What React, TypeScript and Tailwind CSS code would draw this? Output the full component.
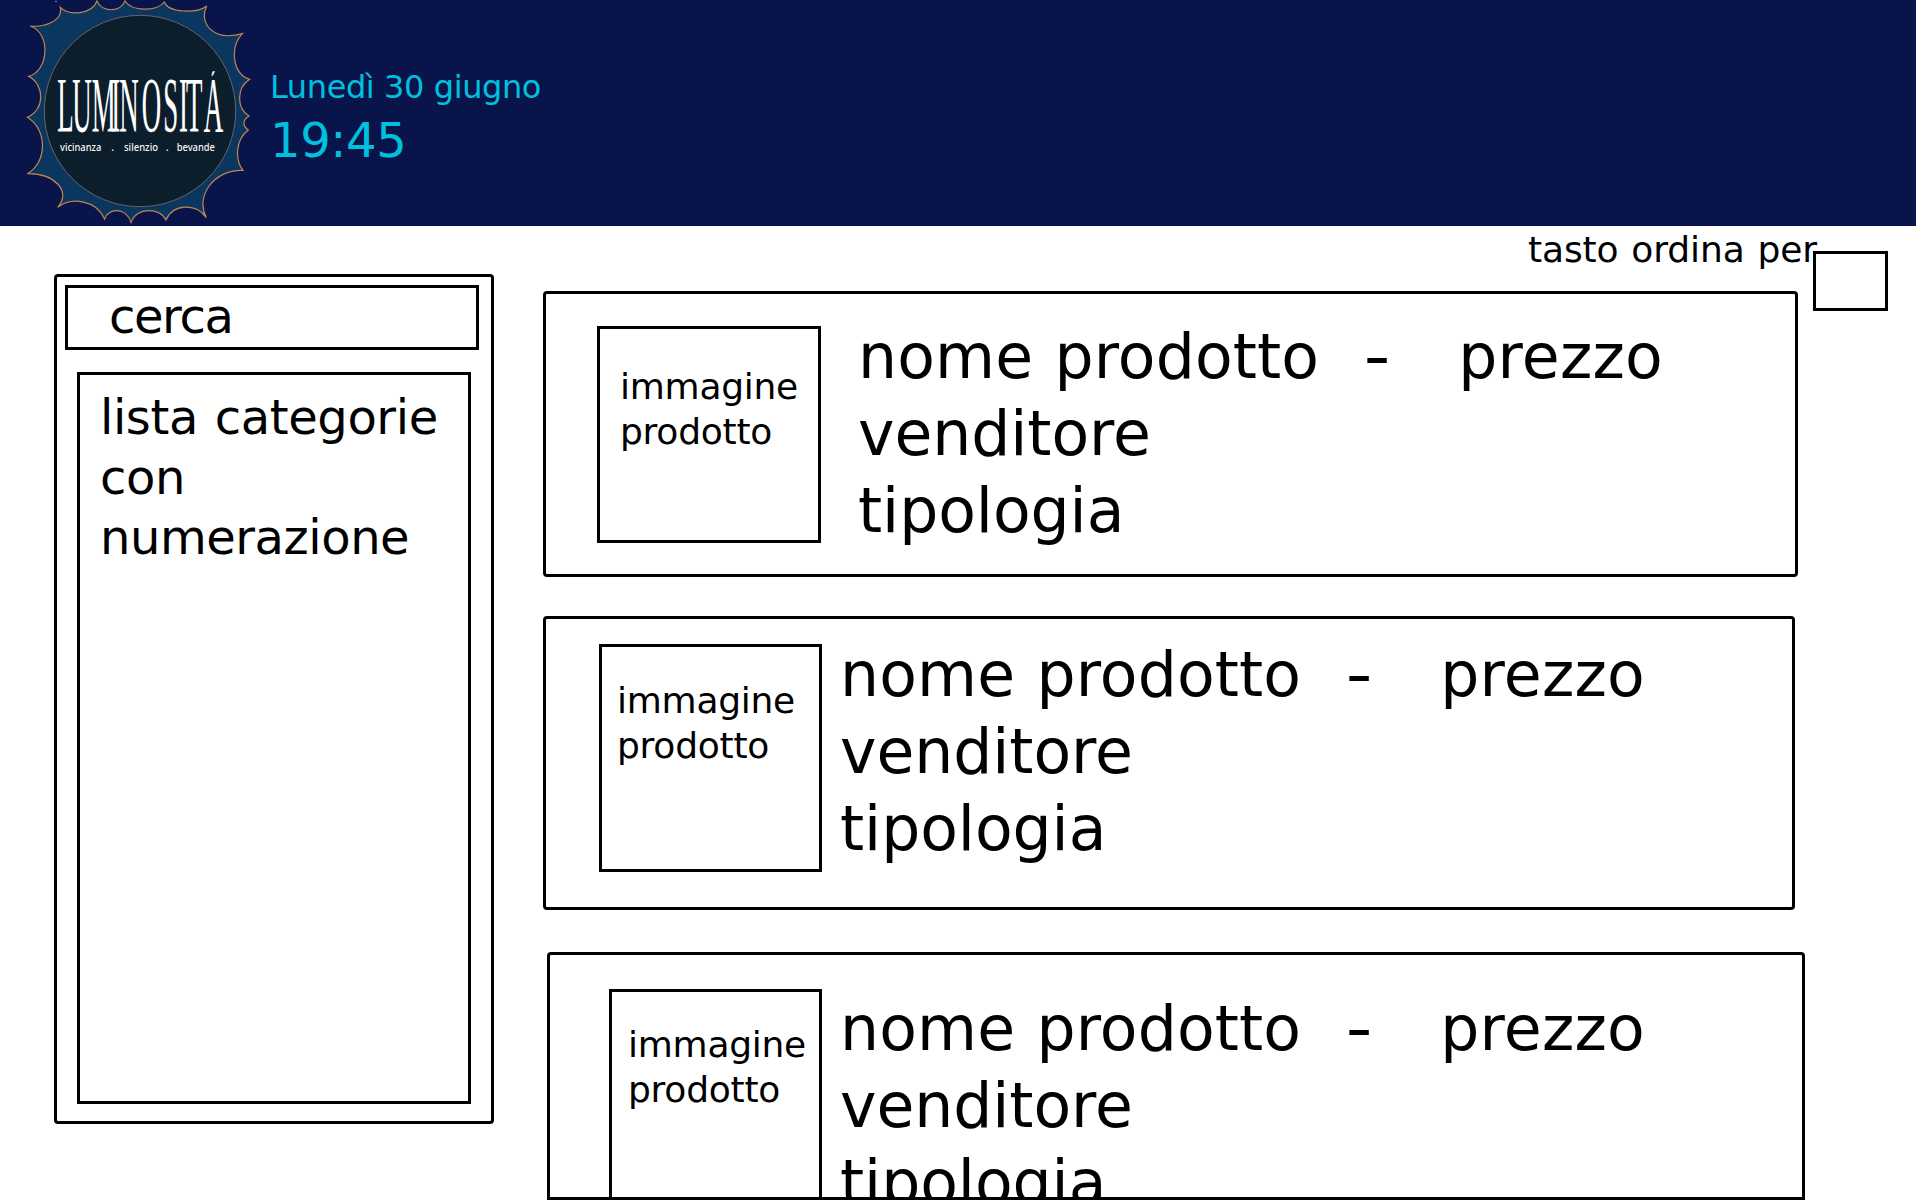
/* Horizontal squeeze applied to the wordmark letters. */
const SQUEEZE = 0.345;
const letterStarts = [172, 217, 275, 334, 358, 425, 490, 537, 558, 611];

function Logo() {
  return (
    <svg width="280" height="226" viewBox="0 0 840 678" className="block shrink-0">
      <path
        d="M91 78C130 82 190 65 181 22C205 47 275 45 291 3C305 38 362 38 375 3C395 35 470 35 493 6C505 38 590 42 620 18C595 70 640 125 727 101C690 140 695 220 749 238C708 265 710 325 747 348C727 360 727 378 745 390C705 420 705 480 729 511C640 508 585 590 619 653C590 610 520 610 498 660C480 622 410 620 393 667C380 622 325 622 314 657C290 600 215 590 173 622C215 575 165 520 82 521C140 490 145 390 82 352C135 330 135 255 86 229C145 215 155 100 91 78Z"
        fill="#0a365f"
        stroke="#c0864f"
        strokeWidth="3.6"
      />
      <path d="M165 4H171" stroke="#8d8795" strokeWidth="3" />
      <circle cx="420" cy="333" r="287" fill="#0c1d2b" stroke="#77706f" strokeWidth="2.5" />
      <clipPath id="wordmark">
        <rect x="160" y="214" width="530" height="190" />
      </clipPath>
      <g clipPath="url(#wordmark)">
        <text
          x={letterStarts.map((x) => (x / SQUEEZE).toFixed(1)).join(" ")}
          y="393"
          transform={`scale(${SQUEEZE} 1)`}
          fill="#fff"
          stroke="#fff"
          strokeWidth="0.6"
          fontFamily="'Liberation Serif', serif"
          fontSize="234"
        >
          LUMINOSITÁ
        </text>
      </g>
      <g fill="#f4f4f4" fontFamily="'Noto Sans', sans-serif" fontSize="32" fontWeight="500">
        <text x="180" y="452" textLength="124" lengthAdjust="spacingAndGlyphs">vicinanza</text>
        <text x="334" y="452">.</text>
        <text x="372" y="452" textLength="102" lengthAdjust="spacingAndGlyphs">silenzio</text>
        <text x="497" y="452">.</text>
        <text x="530" y="452" textLength="115" lengthAdjust="spacingAndGlyphs">bevande</text>
      </g>
    </svg>
  );
}

type Product = { card: string; image: string; info: string };

const products: Product[] = [
  {
    card: "h-[286px] w-[1255px] rounded-[4px]",
    image: "ml-[51px] mt-8 h-[217px] w-56 pl-[20px] pt-[35px]",
    info: "ml-[37px] mt-[25px]",
  },
  {
    card: "mt-[39px] h-[294px] w-[1252px] rounded-[4px]",
    image: "ml-[53px] mt-[25px] h-[228px] w-[223px] pl-[15px] pt-[31px]",
    info: "ml-[18px] mt-[18px]",
  },
  {
    card: "ml-1 mt-[42px] h-[248px] w-[1258px] rounded-t-[4px]",
    image: "ml-[59px] mt-[34px] h-[230px] w-[213px] pl-[16px] pt-[30px]",
    info: "ml-[18px] mt-[36px]",
  },
];

function ProductCard({ card, image, info }: Product) {
  return (
    <article className={`flex items-start overflow-hidden border-3 border-black ${card}`}>
      <div className={`shrink-0 border-3 border-black text-[36px] leading-[45px] tracking-[-0.25px] ${image}`}>
        immagine
        <br />
        prodotto
      </div>
      <div className={`text-[61.6px] leading-[77px] tracking-[-0.05px] ${info}`}>
        <div className="flex whitespace-pre">
          <span className="tracking-[0.15px] [word-spacing:1.5px]">nome prodotto</span>
          <span className="ml-[44px] w-7 origin-center scale-x-120 text-center">-</span>
          <span className="ml-[67px] tracking-[0.25px]">prezzo</span>
        </div>
        <div>venditore</div>
        <div>tipologia</div>
      </div>
    </article>
  );
}

export default function App() {
  return (
    <div className="h-[1200px] w-[1920px] overflow-hidden bg-white font-['DejaVu_Sans',sans-serif] text-black">
      <header className="flex h-[226px] w-[1916px] bg-[#09144a] text-[#00c0de]">
        <Logo />
        <div className="-ml-[10px] pt-[67px]">
          <div className="text-[32px] leading-10 tracking-[-0.4px]">Lunedì 30 giugno</div>
          <div className="mt-[3px] text-[48px] leading-[60px] tracking-[-0.4px]">19:45</div>
        </div>
      </header>

      <div className="flex items-start">
        <aside className="ml-[54px] mt-12 h-[850px] w-[440px] rounded-[4px] border-3 border-black text-[48px] leading-[60px]">
          <div className="ml-2 mt-2 h-[65px] w-[414px] border-3 border-black pl-[41px] tracking-[-1.4px]">
            <div className="-mt-[2px]">cerca</div>
          </div>
          <div className="ml-5 mt-[22px] h-[732px] w-[394px] border-3 border-black pl-[20px] pt-[12px] tracking-[-0.4px]">
            <span className="[word-spacing:2px]">lista categorie</span>
            <br />
            con
            <br />
            <span className="tracking-[-0.45px]">numerazione</span>
          </div>
        </aside>

        <main className="ml-[49px] w-[1345px]">
          <div className="flex h-[65px] items-start justify-end">
            <span className="-mr-[4px] mt-px whitespace-pre text-[36px] leading-[45px] tracking-[-0.1px] [word-spacing:1.5px]">
              tasto ordina per
            </span>
            <div className="mt-[25px] h-[60px] w-[75px] shrink-0 border-3 border-black" />
          </div>
          {products.map((p) => (
            <ProductCard key={p.card} {...p} />
          ))}
        </main>
      </div>
    </div>
  );
}
